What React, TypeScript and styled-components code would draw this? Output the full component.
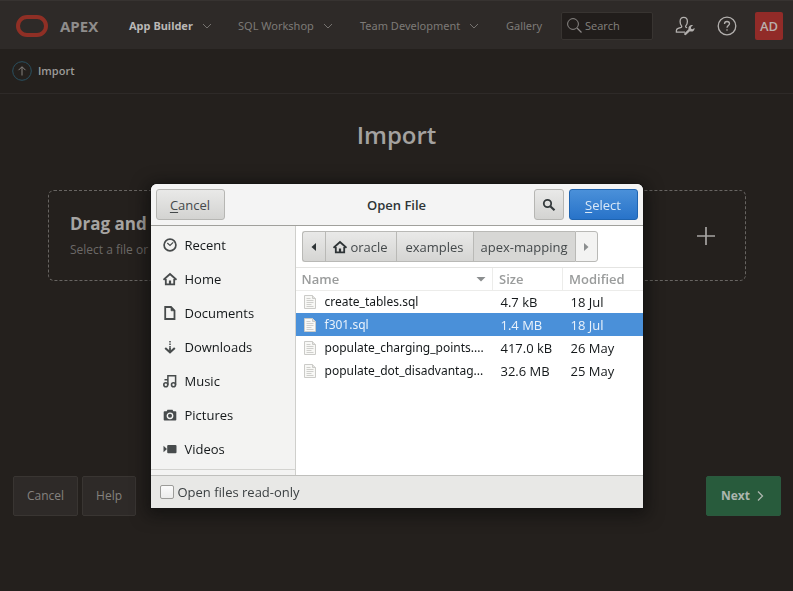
import React from "react";
import styled, { createGlobalStyle, css } from "styled-components";

const GlobalStyle = createGlobalStyle`
  *, *::before, *::after { box-sizing: border-box; }
  body {
    margin: 0;
    background: #24201d;
    font-family: "Open Sans", "Noto Sans", sans-serif;
  }
  button, input { font-family: inherit; }
`;

const Page = styled.div`
  min-height: 100vh;
  display: flex;
  flex-direction: column;
  font-size: 12px;
  line-height: 16px;
  color: #84817e;
`;

/* ---------- Application header ---------- */

const TopBar = styled.header`
  display: flex;
  align-items: center;
  height: 49px;
  padding: 1px 10px 0 16px;
  background: #2e2a28;
  border-top: 1px solid #373331;
`;

const Brand = styled.a`
  display: flex;
  align-items: center;
  gap: 12px;
  width: 113px;
  color: #8f8d8c;
  font-size: 15px;
  font-weight: 700;
  line-height: 20px;
  text-decoration: none;
`;

const Nav = styled.nav`
  display: grid;
  grid-template-columns: 109px 122px 146px auto;
`;

const NavItem = styled.button<{ $active?: boolean }>`
  display: flex;
  align-items: center;
  gap: 9px;
  padding: 0;
  border: 0;
  background: none;
  white-space: nowrap;
  font-family: "Noto Sans", sans-serif;
  font-size: 11px;
  line-height: 16px;
  font-weight: ${(p) => (p.$active ? 700 : 400)};
  color: ${(p) => (p.$active ? "#bab8b6" : "#7d7a77")};
`;

const Tools = styled.div`
  display: flex;
  align-items: center;
  margin-left: auto;
`;

const SearchBox = styled.label`
  display: flex;
  align-items: center;
  gap: 3px;
  width: 92px;
  height: 28px;
  padding: 0 5px;
  border: 1px solid #383431;
  border-radius: 2px;
  background: #211d1b;
`;

const SearchInput = styled.input`
  flex: 1;
  min-width: 0;
  padding: 0;
  border: 0;
  outline: 0;
  background: none;
  font-size: 11px;
  line-height: 16px;
  color: #85827f;
  &::placeholder { color: #85827f; opacity: 1; }
`;

const IconButton = styled.button`
  display: grid;
  place-items: center;
  width: 20px;
  height: 20px;
  margin-left: 22px;
  padding: 0;
  border: 0;
  background: none;
`;

const Avatar = styled.button`
  width: 28px;
  height: 28px;
  margin-left: 18px;
  padding: 0;
  border: 0;
  border-radius: 2px;
  background: #912b28;
  color: #b9afac;
  font-size: 13px;
  font-weight: 600;
`;

const Breadcrumb = styled.nav`
  display: flex;
  align-items: center;
  gap: 6px;
  height: 45px;
  padding: 0 12px;
  border-bottom: 1px solid #2e2a28;
`;

const Crumb = styled.span`
  color: #9d9b99;
  font-size: 11px;
  font-weight: 600;
`;

/* ---------- Import page ---------- */

const Main = styled.main`
  flex: 1;
  display: flex;
  flex-direction: column;
`;

const Title = styled.h1`
  margin: 23px 0 0;
  text-align: center;
  font-size: 24px;
  line-height: 36px;
  font-weight: 600;
  color: #a4a2a0;
`;

const DropZone = styled.section`
  display: flex;
  align-items: center;
  justify-content: space-between;
  height: 91px;
  margin: 37px 47px 0 48px;
  padding: 0 30px 0 21px;
  border: 1px dashed #686562;
  border-radius: 6px;
`;

const DropTitle = styled.h2`
  margin: 0;
  font-size: 17px;
  line-height: 24px;
  font-weight: 700;
  color: #a6a4a2;
`;

const DropHint = styled.p`
  margin: 4px 0 0;
  font-size: 12px;
  line-height: 20px;
  color: #6c6967;
`;

const Actions = styled.footer`
  display: flex;
  gap: 4px;
  margin-top: 195px;
  padding: 0 12px 0 13px;
`;

const PageButton = styled.button<{ $primary?: boolean }>`
  display: flex;
  align-items: center;
  gap: 4px;
  height: 40px;
  padding: 0 13px;
  border: 1px solid #393532;
  border-radius: 2px;
  background: #2e2a28;
  color: #85827f;
  font-size: 12px;
  line-height: 16px;
  ${(p) =>
    p.$primary &&
    css`
      margin-left: auto;
      padding: 0 14px;
      border-color: #2b593e;
      background: #285b3c;
      color: #adb6af;
      font-weight: 700;
    `}
`;

/* ---------- File dialog ---------- */

const Overlay = styled.div`
  position: fixed;
  inset: 0;
  display: flex;
  align-items: flex-start;
  justify-content: center;
  padding-top: 184px;
`;

const Dialog = styled.div`
  display: flex;
  flex-direction: column;
  width: 62%;
  min-width: 492px;
  border-radius: 6px 6px 0 0;
  overflow: hidden;
  background: #ffffff;
  box-shadow: 0 0 0 1px rgba(20, 20, 20, 0.5), 0 3px 16px 4px rgba(10, 10, 10, 0.6);
  font-size: 13px;
  line-height: 18px;
  color: #14181a;
`;

const DialogHeader = styled.header`
  display: grid;
  grid-template-columns: 1fr auto 1fr;
  align-items: center;
  height: 42px;
  padding: 0 5px;
  background: #f4f4f4;
  border-bottom: 1px solid #a0a09c;
`;

const DialogTitle = styled.h2`
  margin: 0;
  font-size: 13px;
  line-height: 18px;
  font-weight: 600;
  color: #2e3436;
`;

const HeaderEnd = styled.div`
  display: flex;
  gap: 5px;
  justify-self: end;
`;

const DialogButton = styled.button<{ $kind?: "icon" | "suggested" }>`
  display: grid;
  place-items: center;
  justify-self: start;
  width: ${(p) => (p.$kind === "icon" ? "30px" : "69px")};
  height: 31px;
  padding: 0;
  border: 1px solid #b6b6b3;
  border-radius: 3px;
  background: linear-gradient(#e9e9e8, #d3d3d1);
  color: #44494b;
  font-size: 13px;
  line-height: 18px;
  u { text-underline-offset: 2px; }
  ${(p) =>
    p.$kind === "suggested" &&
    css`
      border-color: #1f64b0;
      background: linear-gradient(#4a90d9, #2873c9);
      color: #d9e8f7;
    `}
`;

const Body = styled.div`
  display: grid;
  grid-template-columns: 145px 1fr;
  height: 249px;
`;

const Places = styled.ul`
  margin: 0;
  padding: 2px 0 0;
  list-style: none;
  background: #f3f3f2;
  border-right: 1px solid #cfcfcc;
  overflow: hidden;
`;

const Place = styled.li`
  &:last-child {
    padding-bottom: 3px;
    border-bottom: 1px solid #d3d3d0;
  }
`;

const PlaceButton = styled.button`
  display: flex;
  align-items: center;
  gap: 8px;
  width: 100%;
  height: 34px;
  padding: 0 12px;
  border: 0;
  background: none;
  color: #14181a;
  font-size: 13px;
  line-height: 18px;
`;

const Files = styled.div`
  min-width: 0;
  background: #ffffff;
`;

const PathBar = styled.nav`
  display: flex;
  padding: 5px 6px;
  border-bottom: 1px solid #e4e4e2;
`;

const PathButton = styled.button<{ $state?: "current" | "disabled"; $width: number }>`
  display: flex;
  align-items: center;
  justify-content: center;
  gap: 3px;
  width: ${(p) => p.$width}px;
  height: 31px;
  padding: 0;
  border: 1px solid #b9b9b6;
  border-right-width: 0;
  background: ${(p) =>
    p.$state === "current"
      ? "#d7d7d5"
      : p.$state === "disabled"
      ? "#f3f3f2"
      : "linear-gradient(#e9e9e8, #d5d5d3)"};
  color: #44494b;
  font-size: 13px;
  line-height: 18px;
  &:first-child { border-radius: 3px 0 0 3px; }
  &:last-child { border-radius: 0 3px 3px 0; border-right-width: 1px; }
`;

const FileTable = styled.table`
  width: 100%;
  table-layout: fixed;
  border-collapse: collapse;
`;

const NameCol = styled.col``;
const SizeCol = styled.col`
  width: 70px;
`;
const DateCol = styled.col`
  width: 80px;
`;

const HeadCell = styled.th`
  height: 22px;
  padding: 0 6px;
  border-bottom: 1px solid #ececea;
  text-align: left;
  font-size: 13px;
  line-height: 18px;
  font-weight: 600;
  color: #9a9c9c;
  & + & { border-left: 1px solid #ececea; }
`;

const SortLabel = styled.span`
  display: flex;
  align-items: center;
  justify-content: space-between;
`;

const Row = styled.tr<{ $selected?: boolean }>`
  height: 23px;
  color: ${(p) => (p.$selected ? "#e9f2fb" : "#14181a")};
  background: ${(p) => (p.$selected ? "#4a90d9" : "#ffffff")};
`;

const Cell = styled.td`
  padding: 0 0 0 8px;
  white-space: nowrap;
  font-size: 13px;
  line-height: 18px;
`;

const FileName = styled.span`
  display: flex;
  align-items: center;
  gap: 9px;
  font-family: "Noto Sans", sans-serif;
  font-size: 12px;
  svg { flex-shrink: 0; }
`;

const DialogFooter = styled.footer`
  display: flex;
  align-items: center;
  height: 33px;
  padding: 0 9px;
  background: #e8e8e6;
  border-top: 1px solid #bfbfbc;
`;

const CheckLabel = styled.label`
  display: flex;
  align-items: center;
  gap: 4px;
  color: #3c4143;
`;

const CheckBox = styled.input`
  appearance: none;
  width: 14px;
  height: 14px;
  margin: 0;
  border: 1px solid #9c9c99;
  border-radius: 2px;
  background: linear-gradient(#fbfbfb, #ececeb);
  &:checked { background: #4a90d9; }
`;

/* ---------- Drawings ---------- */

const Logo = () => (
  <svg width="32" height="22" viewBox="0 0 32 22" aria-hidden="true">
    <rect x="2" y="2" width="28" height="18" rx="9" fill="none" stroke="#8f2f25" strokeWidth="4" />
  </svg>
);

const Chevron = () => (
  <svg width="10" height="8" viewBox="0 0 10 8" fill="none" stroke="#75726f" aria-hidden="true">
    <path d="M1 2l4 4 4-4" />
  </svg>
);

const SearchGlyph = () => (
  <svg width="15" height="15" viewBox="0 0 15 15" fill="none" stroke="#8b8886" aria-hidden="true">
    <circle cx="6" cy="6" r="5.4" />
    <path d="M10 10l4.5 4.5" strokeWidth="1.3" />
  </svg>
);

const AdminGlyph = () => (
  <svg width="20" height="20" viewBox="0 0 20 20" fill="none" stroke="#b3b0ae" strokeWidth="1.3" aria-hidden="true">
    <path d="M10 16.200H1.400v-1.600c0-1.200.6-1.800 1.700-2.200l3-1.100c.7-.3.8-1 .3-1.600C5.500 8.400 5.100 7 5.100 5.400 5.100 2.900 6.500 1.300 8.700 1.300s3.700 1.600 3.700 4.100c0 1.600-.5 3-1.500 4.300-.5.6-.3 1.300.4 1.600l.8.3" />
    <path d="M10.300 18l4-3.800" strokeWidth="2.400" strokeLinecap="round" />
    <path
      d="M18 9.200c-1.600-.4-3.300.2-4.100 1.500-.6 1-.6 2.100-.2 3l1.700 1.700c1 .3 2.200.2 3-.5.9-.7 1.300-1.700 1.200-2.800l-2.200 1.200-1.300-.6-.1-1.600z"
      fill="#b3b0ae"
      stroke="none"
    />
  </svg>
);

const HelpGlyph = () => (
  <svg width="20" height="20" viewBox="0 0 20 20" fill="none" stroke="#b3b0ae" strokeWidth="1.3" aria-hidden="true">
    <circle cx="10" cy="10" r="8.800" />
    <path d="M7.500 8c0-1.500 1-2.500 2.500-2.500s2.500 1 2.500 2.300c0 1.700-2.500 1.900-2.500 4" />
    <circle cx="10" cy="14" r=".8" fill="#b3b0ae" stroke="none" />
  </svg>
);

const UpGlyph = () => (
  <svg width="20" height="20" viewBox="0 0 20 20" fill="none" aria-hidden="true">
    <circle cx="10" cy="10" r="9.300" stroke="#2a5060" />
    <path d="M10 14.500V6M6.500 9.200L10 5.700l3.500 3.500" stroke="#85827f" />
  </svg>
);

const PlusGlyph = () => (
  <svg width="18" height="18" viewBox="0 0 18 18" stroke="#a6a4a2" strokeWidth="1.700" aria-hidden="true">
    <path d="M9 0v18M0 9h18" />
  </svg>
);

const NextGlyph = () => (
  <svg width="12" height="12" viewBox="0 0 12 12" fill="none" stroke="#adb6af" strokeWidth="1.300" aria-hidden="true">
    <path d="M4 1.500L8.500 6 4 10.500" />
  </svg>
);

const FindGlyph = () => (
  <svg width="14" height="14" viewBox="0 0 14 14" fill="none" stroke="#343a3c" aria-hidden="true">
    <circle cx="5.500" cy="5.500" r="3.700" strokeWidth="1.800" />
    <path d="M8.300 8.300l4.200 4" strokeWidth="2.200" />
  </svg>
);

const glyphs: Record<string, React.ReactNode> = {
  Recent: (
    <>
      <circle cx="7" cy="7" r="5.900" strokeWidth="1.700" />
      <path d="M4.300 5L7 7.500l3.200-3.200" strokeWidth="1.200" />
    </>
  ),
  Home: (
    <>
      <path d="M.5 7.800L7 2l6.500 5.800" strokeWidth="1.800" />
      <path d="M2.800 7v5.300h8.400V7" strokeWidth="1.800" />
      <path d="M7 8.500v4" strokeWidth="2.200" />
    </>
  ),
  Documents: (
    <>
      <path d="M2.200 1h5.800l3.500 3.500v8.500H2.200z" strokeWidth="1.800" />
      <path d="M8 1.500v3.300h3.500z" fill="#474b4c" strokeWidth=".6" />
    </>
  ),
  Downloads: (
    <>
      <path d="M7 1v7" strokeWidth="1.500" strokeDasharray="1.500 1" />
      <path d="M7 7.500v4" strokeWidth="1.800" />
      <path d="M2.200 8L7 12.300 11.800 8" strokeWidth="2" />
    </>
  ),
  Music: (
    <>
      <circle cx="2.800" cy="10.700" r="2" strokeWidth="1.600" />
      <circle cx="10.500" cy="10.700" r="2" strokeWidth="1.600" />
      <path d="M4.900 10.700V1.700h7.700v9M1.500 5.800h3.400" strokeWidth="1.500" />
    </>
  ),
  Pictures: (
    <>
      <path
        d="M4.500 1.800h5l.8 1.500h2.200c.4 0 .8.400.8.800v7.700c0 .500-.4.800-.8.800h-11c-.4 0-.8-.300-.8-.800V4.100c0-.400.4-.800.8-.800h2.200z"
        fill="#474b4c"
        stroke="none"
      />
      <circle cx="7" cy="7.800" r="2.700" stroke="#f3f3f2" strokeWidth="1.400" />
    </>
  ),
  Videos: (
    <>
      <rect x="4.200" y="3" width="9.300" height="8.300" rx="1" fill="#474b4c" stroke="none" />
      <path d="M.5 3.800L4 7 .5 10.300z" fill="#474b4c" stroke="none" />
    </>
  ),
};

const PlaceGlyph = ({ name, color = "#474b4c" }: { name: string; color?: string }) => (
  <svg width="14" height="14" viewBox="0 0 14 14" fill="none" stroke={color} aria-hidden="true">
    {glyphs[name]}
  </svg>
);

const Triangle = ({ dir }: { dir: "left" | "right" | "down" }) => {
  const shape = { left: "M7 1v8L2.500 5z", right: "M3 1v8l4.500-4z", down: "M.5 3h9L5 7.500z" }[dir];
  return (
    <svg width="10" height="10" viewBox="0 0 10 10" fill={dir === "left" ? "#2e3436" : "#8b8e8f"} aria-hidden="true">
      <path d={shape} />
    </svg>
  );
};

const FileGlyph = () => (
  <svg width="12" height="14" viewBox="0 0 12 14" aria-hidden="true">
    <path d="M.5.500h8l3 3v10H.500z" fill="#f8f8f6" stroke="#cbcbc8" />
    <path d="M8.500.500v3h3" fill="#e3e3e0" stroke="#cbcbc8" />
    <path d="M2.500 3.500h4M2.500 5.500h7M2.500 7.500h7M2.500 9.500h5M2.500 11.500h7" stroke="#c4c4c1" strokeWidth=".8" />
  </svg>
);

/* ---------- Data ---------- */

const places = ["Recent", "Home", "Documents", "Downloads", "Music", "Pictures", "Videos"];

const files = [
  { name: "create_tables.sql", size: "4.7 kB", modified: "18 Jul" },
  { name: "f301.sql", size: "1.4 MB", modified: "18 Jul", selected: true },
  { name: "populate_charging_points....", size: "417.0 kB", modified: "26 May" },
  { name: "populate_dot_disadvantag...", size: "32.6 MB", modified: "25 May" },
];

const FileDialog = () => (
  <Overlay>
    <Dialog role="dialog" aria-labelledby="dialog-title">
      <DialogHeader>
        <DialogButton>
          <span><u>C</u>ancel</span>
        </DialogButton>
        <DialogTitle id="dialog-title">Open File</DialogTitle>
        <HeaderEnd>
          <DialogButton $kind="icon" aria-label="Search files">
            <FindGlyph />
          </DialogButton>
          <DialogButton $kind="suggested">
            <span><u>S</u>elect</span>
          </DialogButton>
        </HeaderEnd>
      </DialogHeader>
      <Body>
        <Places>
          {places.map((name) => (
            <Place key={name}>
              <PlaceButton>
                <PlaceGlyph name={name} />
                {name}
              </PlaceButton>
            </Place>
          ))}
        </Places>
        <Files>
          <PathBar aria-label="Folder path">
            <PathButton $width={23} aria-label="Back"><Triangle dir="left" /></PathButton>
            <PathButton $width={71}><PlaceGlyph name="Home" color="#2e3436" /> oracle</PathButton>
            <PathButton $width={77}>examples</PathButton>
            <PathButton $width={102} $state="current">apex-mapping</PathButton>
            <PathButton $width={23} $state="disabled" aria-label="Forward"><Triangle dir="right" /></PathButton>
          </PathBar>
          <FileTable>
            <colgroup>
              <NameCol />
              <SizeCol />
              <DateCol />
            </colgroup>
            <thead>
              <tr>
                <HeadCell scope="col"><SortLabel>Name <Triangle dir="down" /></SortLabel></HeadCell>
                <HeadCell scope="col">Size</HeadCell>
                <HeadCell scope="col">Modified</HeadCell>
              </tr>
            </thead>
            <tbody>
              {files.map((file) => (
                <Row key={file.name} $selected={file.selected} aria-selected={file.selected}>
                  <Cell><FileName><FileGlyph />{file.name}</FileName></Cell>
                  <Cell>{file.size}</Cell>
                  <Cell>{file.modified}</Cell>
                </Row>
              ))}
            </tbody>
          </FileTable>
        </Files>
      </Body>
      <DialogFooter>
        <CheckLabel>
          <CheckBox type="checkbox" />
          Open files read-only
        </CheckLabel>
      </DialogFooter>
    </Dialog>
  </Overlay>
);

export default function App() {
  return (
    <>
      <GlobalStyle />
      <Page>
        <TopBar>
          <Brand href="#"><Logo />APEX</Brand>
          <Nav>
            <NavItem $active>App Builder <Chevron /></NavItem>
            <NavItem>SQL Workshop <Chevron /></NavItem>
            <NavItem>Team Development <Chevron /></NavItem>
            <NavItem>Gallery</NavItem>
          </Nav>
          <Tools>
            <SearchBox>
              <SearchGlyph />
              <SearchInput type="search" placeholder="Search" aria-label="Search" />
            </SearchBox>
            <IconButton aria-label="Administration"><AdminGlyph /></IconButton>
            <IconButton aria-label="Help"><HelpGlyph /></IconButton>
            <Avatar>AD</Avatar>
          </Tools>
        </TopBar>
        <Breadcrumb aria-label="Breadcrumb">
          <UpGlyph />
          <Crumb>Import</Crumb>
        </Breadcrumb>
        <Main>
          <Title>Import</Title>
          <DropZone>
            <div>
              <DropTitle>Drag and</DropTitle>
              <DropHint>Select a file or</DropHint>
            </div>
            <PlusGlyph />
          </DropZone>
          <Actions>
            <PageButton>Cancel</PageButton>
            <PageButton>Help</PageButton>
            <PageButton $primary>Next <NextGlyph /></PageButton>
          </Actions>
        </Main>
      </Page>
      <FileDialog />
    </>
  );
}
